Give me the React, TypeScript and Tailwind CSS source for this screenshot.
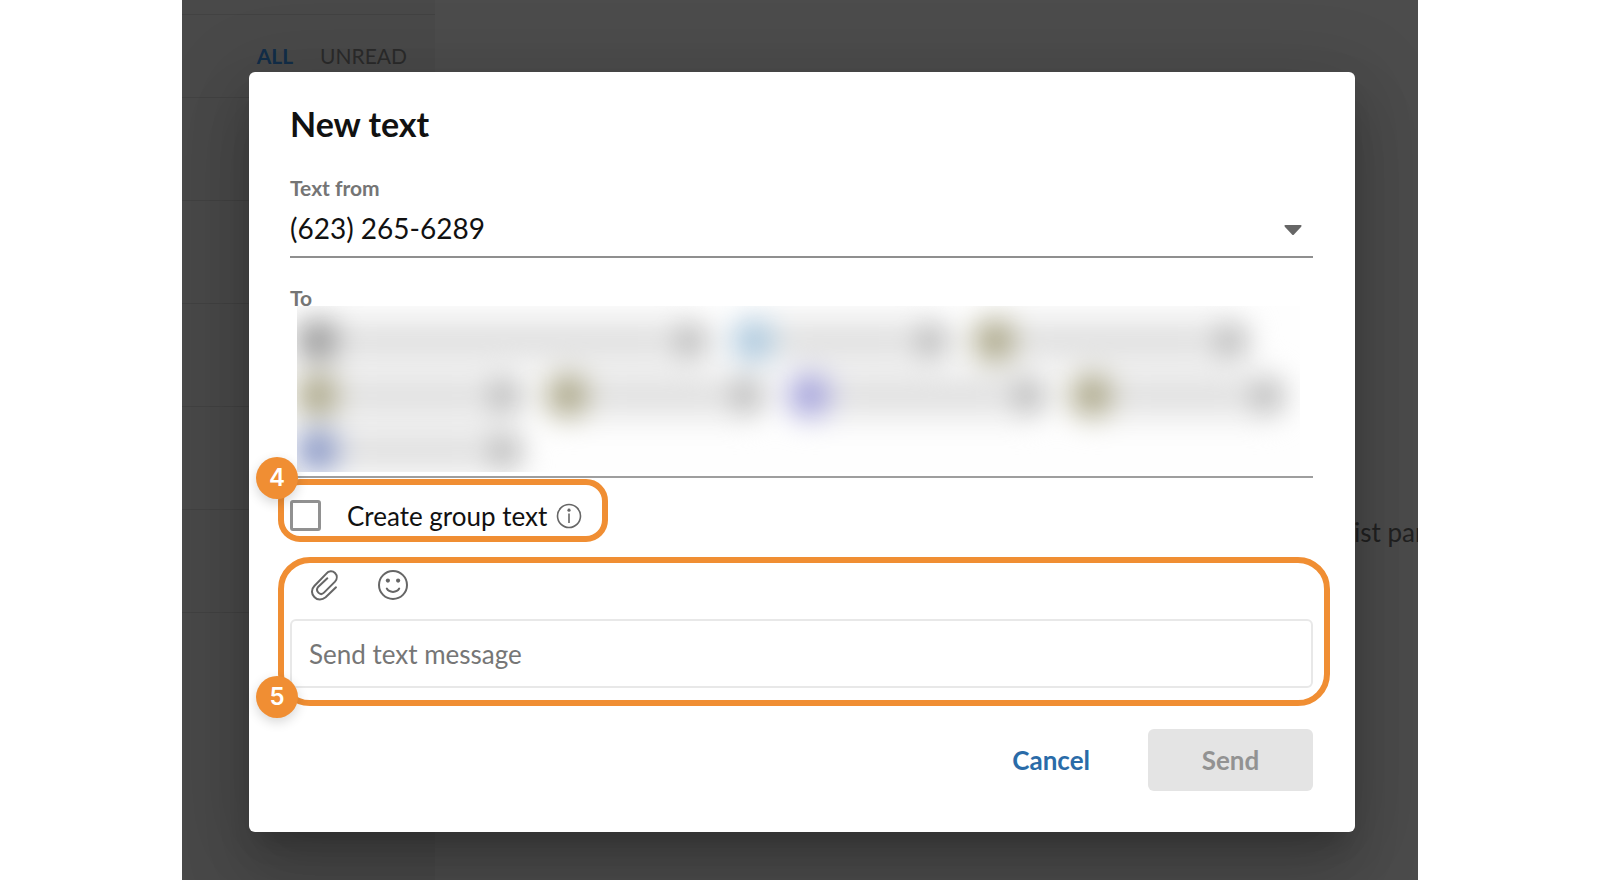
import { useState } from "react";

interface Recipient {
  id: number;
  width: number;
  color: string;
}

const recipients: Recipient[] = [
  { id: 1, width: 416, color: "#8f8f8f" },
  { id: 2, width: 221, color: "#a4c4dc" },
  { id: 3, width: 279, color: "#a39e7c" },
  { id: 4, width: 230, color: "#a39e7c" },
  { id: 5, width: 222, color: "#a39e7c" },
  { id: 6, width: 262, color: "#9a98d8" },
  { id: 7, width: 218, color: "#a39e7c" },
  { id: 8, width: 230, color: "#7c8cc0" },
];

const conversations = [1, 2, 3, 4, 5];

function PaperclipIcon() {
  return (
    <svg
      viewBox="212 356 90 96"
      className="h-8 w-[30px]"
      fill="none"
      stroke="#666666"
      strokeWidth="6"
      strokeLinecap="round"
    >
      <path d="M290 411 L259 441 C248 450 234 450 225 440 C216 431 215 417 225 407 L261 370 C268 361 280 361 287 368 C294 375 294 386 287 394 L254 427 C249 432 242 432 237 427 C232 422 232 415 237 409 L264 384" />
    </svg>
  );
}

function SmileIcon() {
  return (
    <svg
      viewBox="0 0 32 32"
      className="size-8"
      fill="none"
      stroke="#666666"
      strokeWidth="2"
      strokeLinecap="round"
    >
      <circle cx="16" cy="16" r="14" />
      <path d="M9.8 19.6 C12.2 24 19.8 24 22.2 19.6" />
      <circle cx="10.9" cy="11.6" r="2.1" fill="#666666" stroke="none" />
      <circle cx="21.1" cy="11.6" r="2.1" fill="#666666" stroke="none" />
    </svg>
  );
}

function InfoIcon() {
  return (
    <svg viewBox="0 0 26 26" className="size-[26px]" fill="none" stroke="#666666">
      <circle cx="13" cy="13" r="11.5" strokeWidth="1.6" />
      <path d="M13 10.5 V20" strokeWidth="1.6" />
      <circle cx="13" cy="7.2" r="1.6" fill="#666666" stroke="none" />
    </svg>
  );
}

function Inbox() {
  return (
    <div className="col-start-1 row-start-1 flex bg-white">
      <aside className="w-[253px] shrink-0 bg-[#f6f6f6]">
        <div className="h-[15px] border-b border-[#dedede]" />
        <div className="flex h-[83px] items-center justify-end gap-[27px] border-b border-[#dedede] pr-7 text-[21px]">
          <a href="#all" className="font-bold text-[#409cf5]">
            ALL
          </a>
          <a href="#unread" className="text-[#909090]">
            UNREAD
          </a>
        </div>
        {conversations.map((id) => (
          <div key={id} className="h-[103px] border-b border-[#dedede]" />
        ))}
      </aside>
      <section className="flex min-w-0 grow justify-end pt-[516px]">
        <p className="w-16 text-[26px] leading-8 whitespace-nowrap text-[#707070]">
          ist par
        </p>
      </section>
    </div>
  );
}

function RecipientChip({ recipient }: { recipient: Recipient }) {
  return (
    <li
      className="flex h-[47px] items-center gap-3 rounded-full bg-[#ebebeb] pl-1"
      style={{ width: recipient.width }}
    >
      <span
        className="size-[41px] rounded-full"
        style={{ backgroundColor: recipient.color }}
      />
      <span className="h-4 grow bg-[#d8d8d8]" />
      <span className="mr-1 size-7 rounded-full bg-[#9c9c9c]" />
    </li>
  );
}

function StepBadge({ step }: { step: number }) {
  return (
    <span className="flex size-[42px] items-center justify-center rounded-full bg-[#f08e33] font-['Inter',sans-serif] text-2xl font-semibold text-white shadow-[0_4px_12px_rgba(0,0,0,0.16)]">
      {step}
    </span>
  );
}

export default function App() {
  const [groupText, setGroupText] = useState(false);
  const [message, setMessage] = useState("");

  return (
    <div className="bg-white px-[182px] font-['Lato',sans-serif]">
      <main className="grid min-h-screen overflow-hidden">
        <Inbox />

        <div className="z-10 col-start-1 row-start-1 bg-black/70 pt-[72px] pr-[63px] pb-12 pl-[67px]">
          <div
            role="dialog"
            aria-labelledby="dialog-title"
            className="rounded-md bg-white pt-8 pr-[42px] pb-[41px] pl-[41px] text-[#111111] shadow-[0_19px_26px_-12px_rgba(0,0,0,0.2),0_41px_65px_5px_rgba(0,0,0,0.14),0_15px_79px_14px_rgba(0,0,0,0.12)]"
          >
            <h1 id="dialog-title" className="text-[34px] leading-10 font-bold">
              New text
            </h1>

            <label
              htmlFor="text-from"
              className="mt-8 block text-[21px] leading-6 font-bold text-[#757575]"
            >
              Text from
            </label>
            <div className="grid items-center border-b-2 border-[#8f8f8f] py-[10px]">
              <select
                id="text-from"
                className="col-start-1 row-start-1 h-9 w-full appearance-none bg-transparent text-[28px] leading-9"
              >
                <option>(623) 265-6289</option>
              </select>
              <svg
                viewBox="0 0 18 10"
                className="pointer-events-none col-start-1 row-start-1 mt-1 mr-[11px] h-[10px] w-[18px] justify-self-end"
              >
                <path
                  d="M1.5 0 H16.5 Q18.4 .4 17 2 L10 9.4 Q9 10.4 8 9.4 L1 2 Q-.4 .4 1.5 0 Z"
                  fill="#666666"
                />
              </svg>
            </div>

            {/* recipients are blurred out, the panel clips the blur */}
            <div className="mt-7 border-b-2 border-[#9e9e9e] pb-1">
              <h2 className="text-[21px] leading-6 font-bold text-[#757575]">To</h2>
              <div className="relative -mt-1 mr-[13px] ml-[7px] h-[166px] overflow-hidden bg-[#fefefe]">
                <ul className="-ml-1 flex flex-wrap gap-x-5 gap-y-2 pt-[11px] blur-[15px]">
                  {recipients.map((recipient) => (
                    <RecipientChip key={recipient.id} recipient={recipient} />
                  ))}
                </ul>
              </div>
            </div>

            <div className="relative mt-px -ml-3 flex h-[63px] w-[330px] items-center rounded-[22px] border-6 border-[#f08e33] pt-[10px] pl-[6px]">
              <input
                id="group-text"
                type="checkbox"
                checked={groupText}
                onChange={(e) => setGroupText(e.target.checked)}
                className="size-[31px] appearance-none rounded-[3px] border-3 border-[#919191] checked:bg-[#1a5fa6]"
              />
              <label htmlFor="group-text" className="ml-[26px] text-[26px] leading-8">
                Create group text
              </label>
              <button type="button" aria-label="About group text" className="ml-[9px]">
                <InfoIcon />
              </button>
              <div className="absolute -top-7 -left-7">
                <StepBadge step={4} />
              </div>
            </div>

            <div className="relative mt-[15px] -mr-[17px] -ml-3 rounded-[32px] border-6 border-[#f08e33] pt-[6px] pr-[11px] pb-3 pl-[6px]">
              <div className="flex gap-[37px] pl-5">
                <button type="button" aria-label="Attach file">
                  <PaperclipIcon />
                </button>
                <button type="button" aria-label="Insert emoji">
                  <SmileIcon />
                </button>
              </div>
              <input
                type="text"
                aria-label="Message"
                placeholder="Send text message"
                value={message}
                onChange={(e) => setMessage(e.target.value)}
                className="mt-[18px] block h-[69px] w-full rounded-md border-2 border-[#e8e8e8] px-[17px] text-[26px] placeholder:text-[#767676]"
              />
              <div className="absolute -bottom-[18px] -left-7">
                <StepBadge step={5} />
              </div>
            </div>

            <div className="mt-[23px] flex justify-end gap-[58px] text-[26px] font-bold">
              <button type="button" className="text-[#2a6ba8]">
                Cancel
              </button>
              <button
                type="button"
                disabled
                className="h-[62px] w-[165px] rounded-md bg-[#e4e4e4] text-[#929292]"
              >
                Send
              </button>
            </div>
          </div>
        </div>
      </main>
    </div>
  );
}
